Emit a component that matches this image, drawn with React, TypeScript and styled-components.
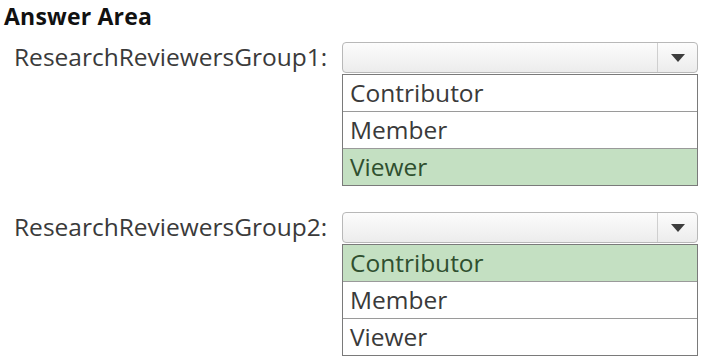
import { createGlobalStyle, styled } from "styled-components";

const GlobalStyle = createGlobalStyle`
  html, body {
    margin: 0;
    padding: 0;
    background: #ffffff;
  }
  body {
    font-family: "Open Sans", "Noto Sans", "Liberation Sans", sans-serif;
    color: #333;
  }
`;

const Page = styled.div`
  width: 701px;
  height: 359px;
  overflow: hidden;
`;

const Title = styled.h1`
  margin: 0;
  padding: 0 0 0 4px;
  height: 42px;
  font-size: 23px;
  line-height: 32px;
  font-weight: 700;
  letter-spacing: 0.2px;
  color: #111;
`;

const Question = styled.div`
  display: grid;
  grid-template-columns: 342px 356px;
  align-items: start;
  margin-bottom: 26px;
`;

const Label = styled.div`
  padding-left: 14px;
  font-size: 24.5px;
  line-height: 30px;
  height: 30px;
  color: #3a3a3a;
  white-space: nowrap;
`;

const Select = styled.div`
  display: flex;
  flex-direction: column;
`;

const Box = styled.div`
  height: 29px;
  display: flex;
  border: 1px solid #b8b8b8;
  border-radius: 4px;
  background: linear-gradient(#fcfcfc, #ececec);
  margin-bottom: 1px;
`;

const BoxValue = styled.div`
  flex: 1;
`;

const ArrowCell = styled.div`
  width: 39px;
  border-left: 1px solid #cfcfcf;
  display: flex;
  align-items: center;
  justify-content: center;
`;

const Arrow = styled.div`
  width: 0;
  height: 0;
  border-left: 7px solid transparent;
  border-right: 7px solid transparent;
  border-top: 8px solid #3d3d3d;
`;

const List = styled.div`
  border: 1px solid #7a7a7a;
  display: flex;
  flex-direction: column;
`;

const Option = styled.div<{ $selected?: boolean }>`
  height: 36px;
  line-height: 36px;
  padding-left: 7px;
  font-size: 24.5px;
  color: ${(p) => (p.$selected ? "#2f4f2f" : "#3a3a3a")};
  background: ${(p) => (p.$selected ? "#c4e0c2" : "#ffffff")};
  & + & {
    border-top: 1px solid #9a9a9a;
  }
`;

const options = ["Contributor", "Member", "Viewer"];

const questions = [
  { label: "ResearchReviewersGroup1:", answer: "Viewer" },
  { label: "ResearchReviewersGroup2:", answer: "Contributor" },
];

export default function App() {
  return (
    <Page>
      <GlobalStyle />
      <Title>Answer Area</Title>
      {questions.map((q) => (
        <Question key={q.label}>
          <Label>{q.label}</Label>
          <Select>
            <Box>
              <BoxValue />
              <ArrowCell>
                <Arrow />
              </ArrowCell>
            </Box>
            <List>
              {options.map((o) => (
                <Option key={o} $selected={o === q.answer}>
                  {o}
                </Option>
              ))}
            </List>
          </Select>
        </Question>
      ))}
    </Page>
  );
}
